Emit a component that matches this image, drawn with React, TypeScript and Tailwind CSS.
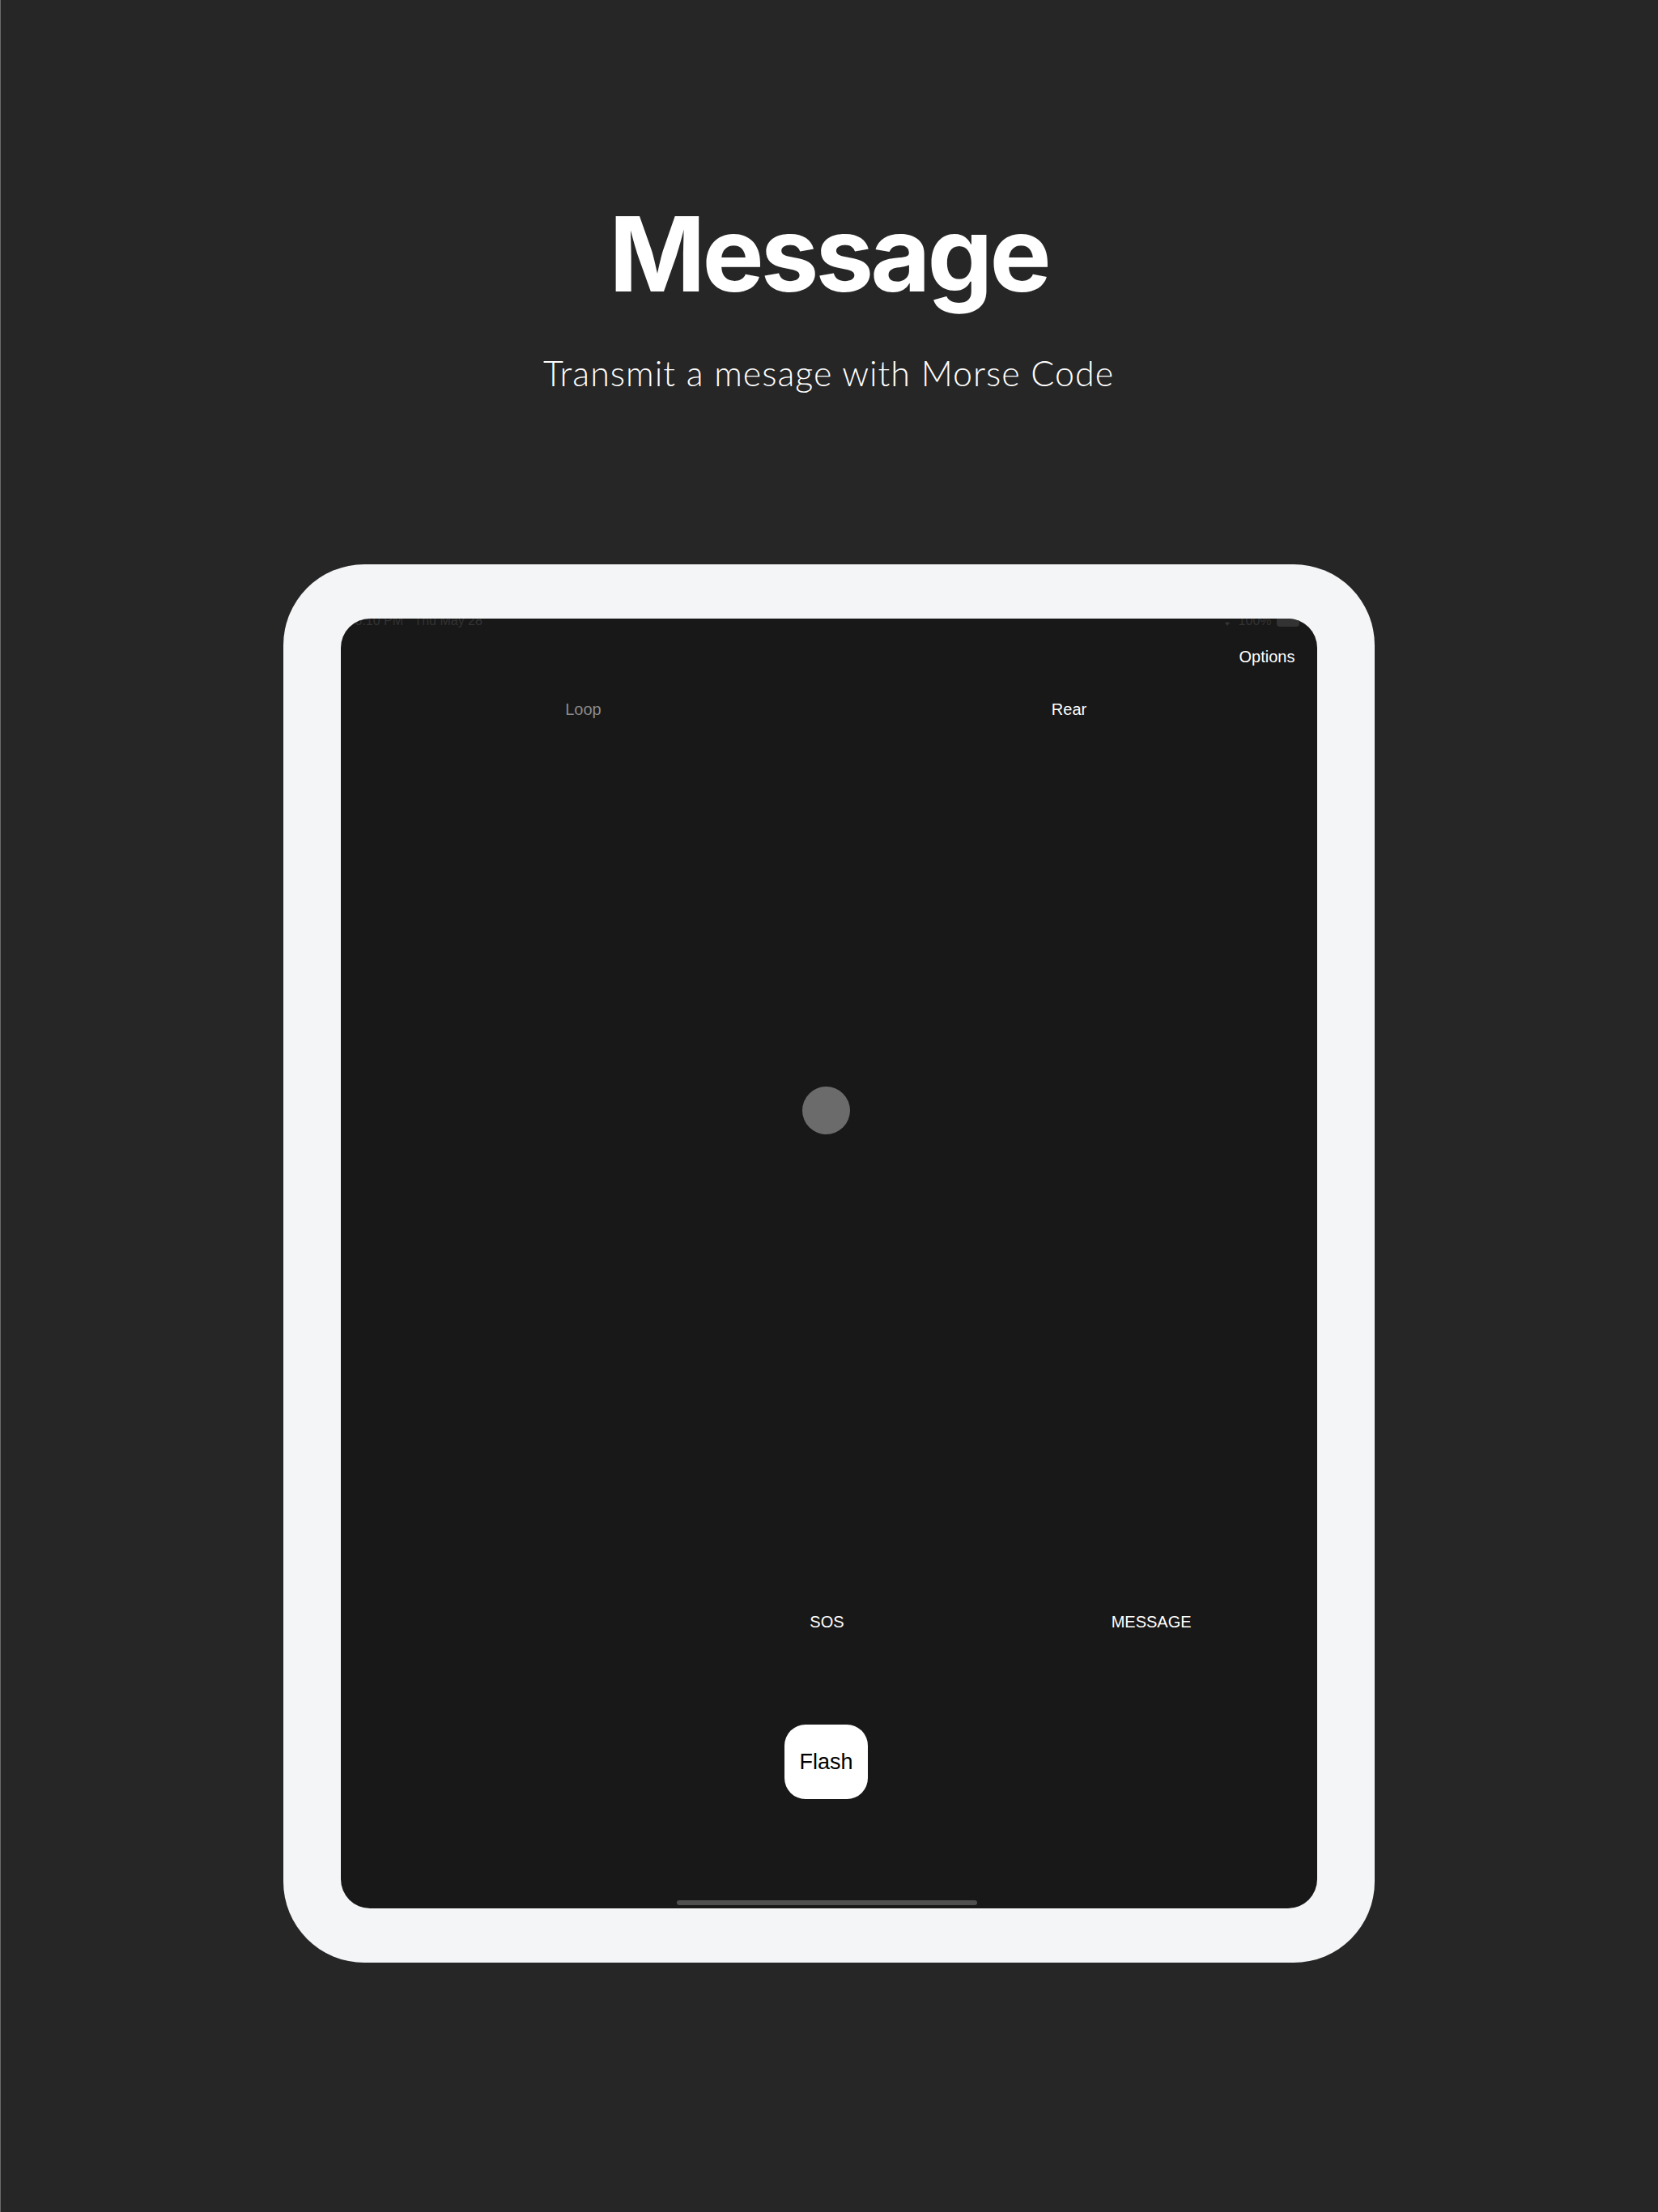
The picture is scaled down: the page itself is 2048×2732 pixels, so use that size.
import React from 'react';

const sans = "font-['Liberation_Sans',Arial,sans-serif]";

const StatusBar: React.FC = () => (
  <div className={`absolute top-[-9px] left-0 right-0 flex justify-between px-[18px] text-[16px] text-[#333333] ${sans}`}>
    <span>3:10 PM&nbsp;&nbsp;&nbsp;Thu May 28</span>
    <span className="flex items-center gap-[6px] pr-[4px]">
      <svg width="16" height="12" viewBox="0 0 16 12" fill="#333333">
        <path d="M8 12 L5 8.5 A4.5 4.5 0 0 1 11 8.5 Z" />
      </svg>
      <span>100%</span>
      <span className="w-[28px] h-[13px] rounded-[4px] bg-[#333333]" />
    </span>
  </div>
);

const App: React.FC = () => {
  return (
    <div className="w-[2048px] h-[2732px] bg-[#262626] border-l border-[#6a6a6a] pr-[2px] flex flex-col items-center">
      {/* Heading */}
      <h1 className="mt-[250px] text-[128px] leading-none font-bold text-white tracking-[-4px] font-['Inter',sans-serif]">
        Message
      </h1>
      <p className="mt-[61px] text-[43px] leading-none font-light text-white tracking-[1px] font-['Lato',sans-serif]">
        Transmit a mesage with Morse Code
      </p>

      {/* Device */}
      <div className="mt-[215px] w-[1348px] h-[1727px] bg-[#f4f5f7] rounded-[100px] px-[71px] py-[67px]">
        <div className={`relative w-full h-full bg-[#181818] rounded-[36px] overflow-hidden flex flex-col ${sans}`}>
          <StatusBar />

          {/* Options */}
          <div className="flex justify-end pr-[27px] pt-[35px]">
            <span className="text-[20px] leading-[24px] text-white">Options</span>
          </div>

          {/* Loop / Rear */}
          <div className="grid grid-cols-2 mt-[41px] pr-[6px] text-[20px] leading-[24px] text-center">
            <span className="text-[#8a8a8a]">Loop</span>
            <span className="text-white">Rear</span>
          </div>

          {/* Signal light */}
          <div className="mt-[454px] pr-[6px] flex justify-center">
            <div className="w-[59px] h-[59px] rounded-full bg-[#6b6b6b]" />
          </div>

          {/* Modes */}
          <div className="grid grid-cols-3 mt-[590px] pr-[4px] text-[20px] leading-[24px] text-center text-white">
            <span></span>
            <span>SOS</span>
            <span>MESSAGE</span>
          </div>

          {/* Flash button */}
          <div className="mt-[115px] pr-[6px] flex justify-center">
            <button className="w-[103px] h-[92px] rounded-[26px] bg-white text-black text-[27px]">
              Flash
            </button>
          </div>

          {/* Home indicator */}
          <div className="mt-auto mb-[4px] pr-[5px] flex justify-center">
            <div className="w-[371px] h-[6px] rounded-full bg-[#4f4f4f]" />
          </div>
        </div>
      </div>
    </div>
  );
};

export default App;
